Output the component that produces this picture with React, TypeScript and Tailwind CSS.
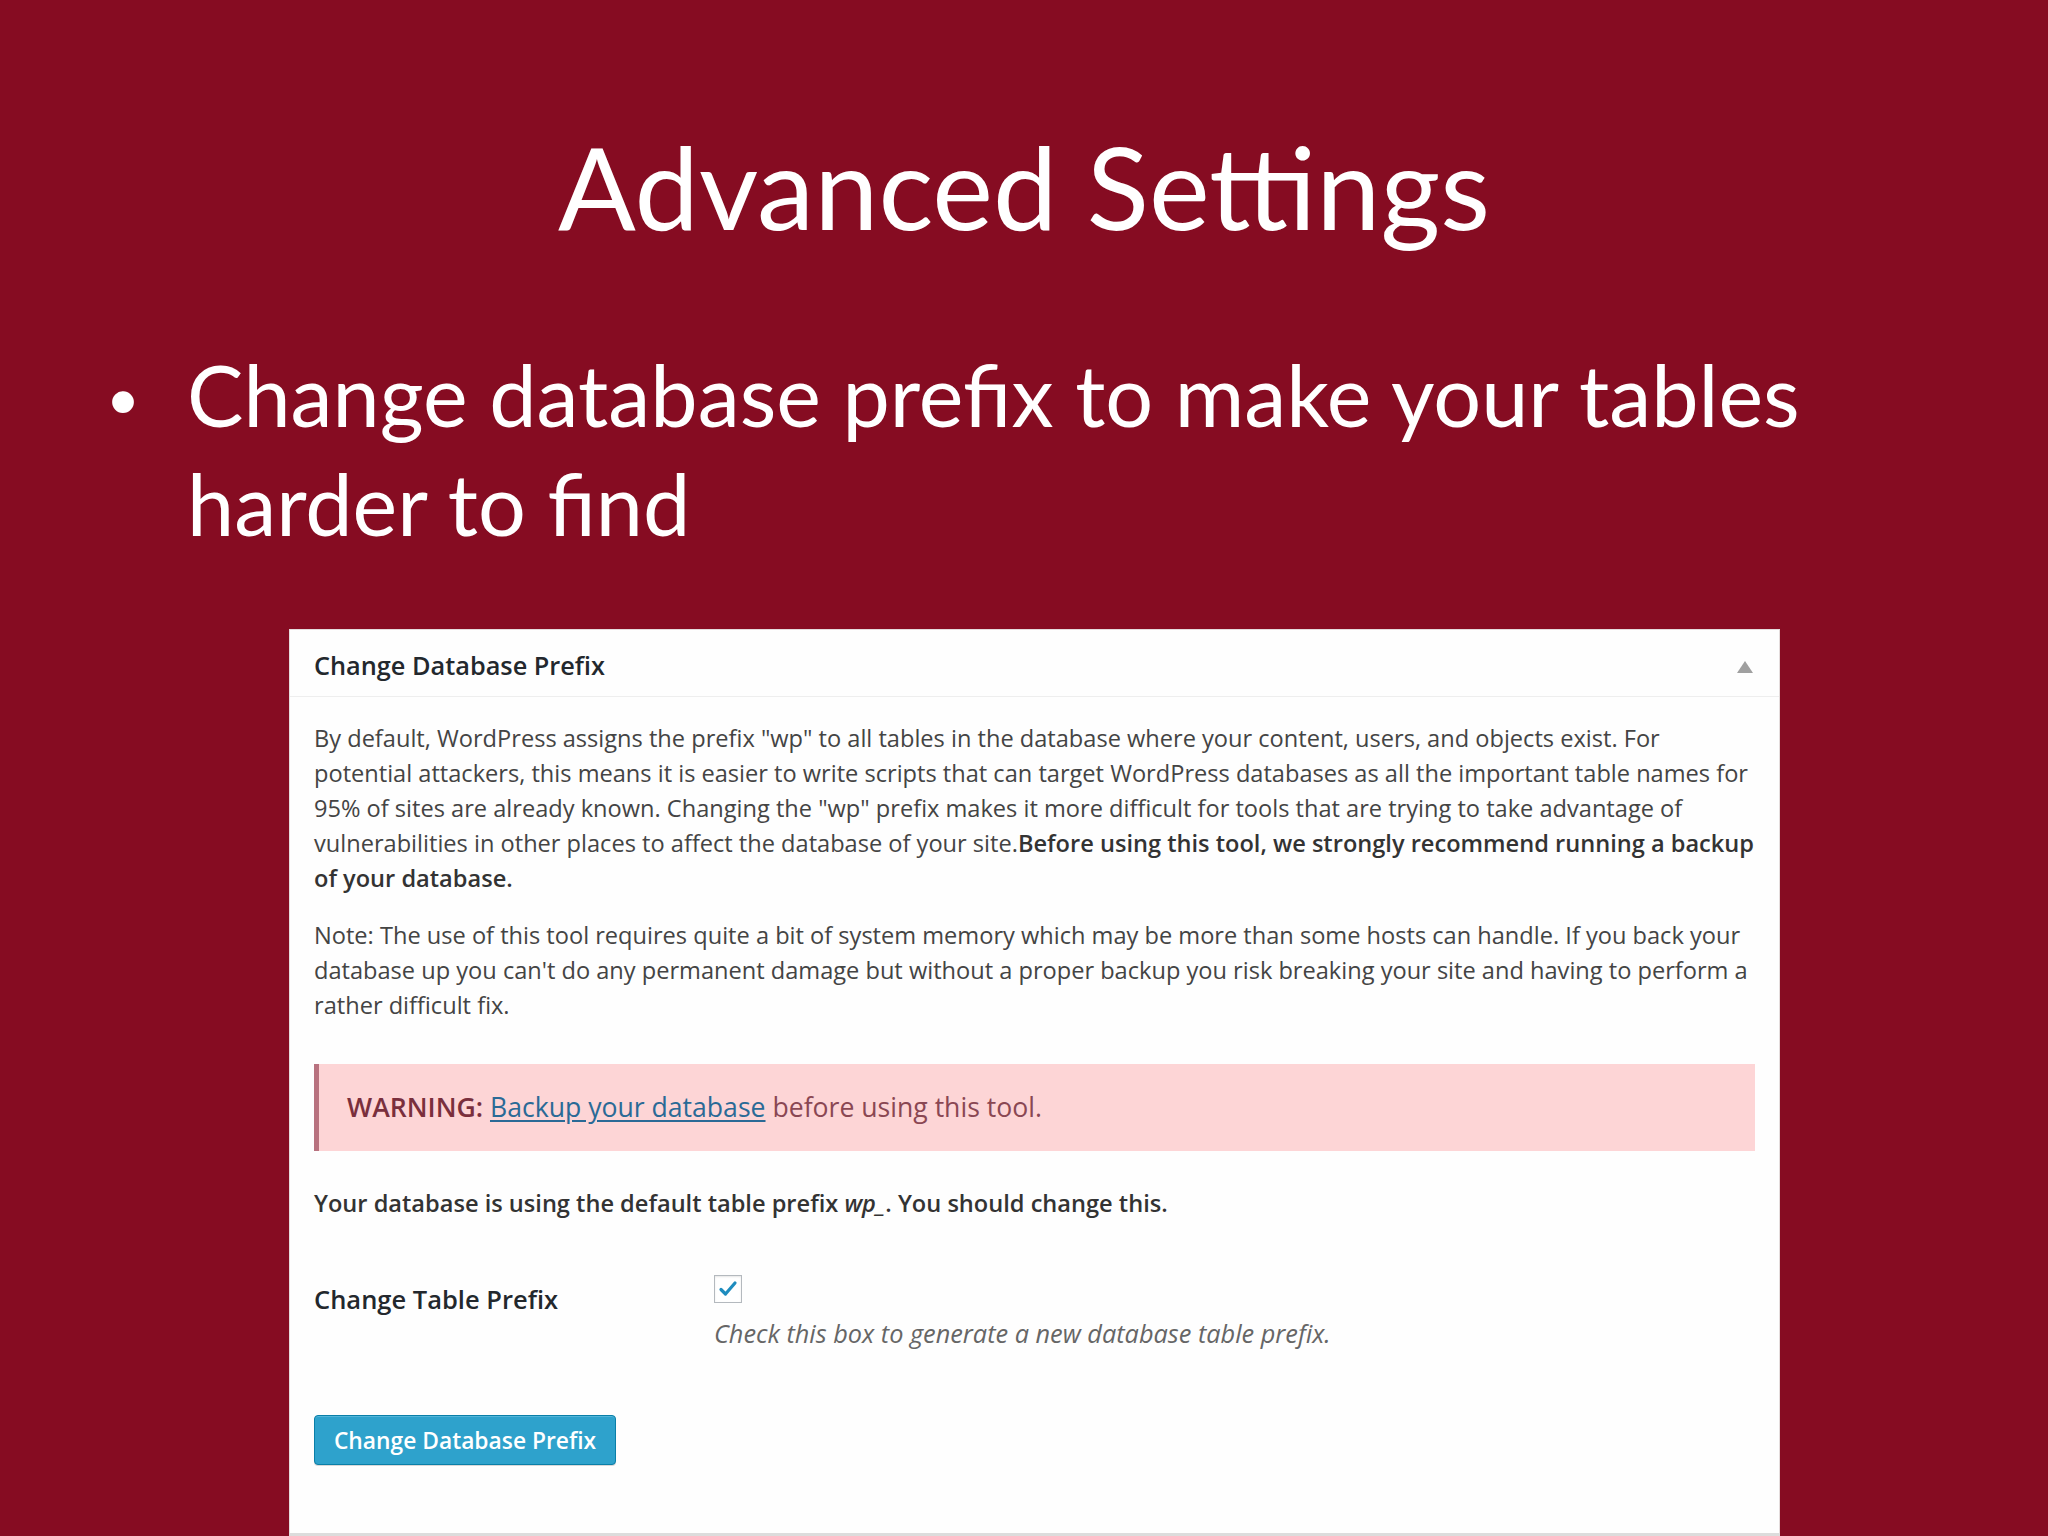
const P1 = [
  'By default, WordPress assigns the prefix "wp" to all tables in the database where your content, users, and objects exist. For',
  'potential attackers, this means it is easier to write scripts that can target WordPress databases as all the important table names for',
  '95% of sites are already known. Changing the "wp" prefix makes it more difficult for tools that are trying to take advantage of',
];

const P2 = [
  "Note: The use of this tool requires quite a bit of system memory which may be more than some hosts can handle. If you back your",
  "database up you can't do any permanent damage but without a proper backup you risk breaking your site and having to perform a",
  "rather difficult fix.",
];

export default function App() {
  return (
    <div className="w-[2048px] h-[1536px] overflow-hidden bg-[#860c22] flex flex-col font-['Lato',sans-serif]">
      <h1 className="pt-[128px] text-center text-white text-[115px] leading-none font-normal">Advanced Settings</h1>
      <ul className="mt-[97px] pl-[108px] text-white text-[84.5px] leading-[109px]">
        <li className="flex items-start">
          <span className="w-[79px] shrink-0 pl-[1px] mt-[7px] text-[80px] leading-[109px] font-['Liberation_Sans',sans-serif]">•</span>
          <span>
            Change database prefix to make your tables
            <br />
            harder to find
          </span>
        </li>
      </ul>

      <div className="ml-[289px] mt-[71px] w-[1491px] flex-1 bg-[#fefefe] border border-[#e4dcdc] border-b-[3px] border-b-[#dcdcdc] flex flex-col font-['Open_Sans',sans-serif]">
        <div className="h-[67px] shrink-0 border-b border-[#eeeeee] px-[24px] pt-[5px] flex items-center justify-between">
          <span className="text-[25.3px] font-semibold text-[#23282d]">Change Database Prefix</span>
          <svg width="16" height="12" viewBox="0 0 16 12" className="mr-[2px] mt-[2px]">
            <path d="M8 0 L16 12 L0 12 Z" fill="#a0a0a0" />
          </svg>
        </div>

        <div className="px-[24px] pt-[24px] text-[23.6px] leading-[35px] text-[#444444]">
          <p className="whitespace-nowrap">
            {P1[0]}
            <br />
            {P1[1]}
            <br />
            {P1[2]}
            <br />
            vulnerabilities in other places to affect the database of your site.
            <b className="font-semibold text-[#333]">Before using this tool, we strongly recommend running a backup</b>
            <br />
            <b className="font-semibold text-[#333]">of your database.</b>
          </p>
          <p className="mt-[22px] whitespace-nowrap">
            {P2[0]}
            <br />
            {P2[1]}
            <br />
            {P2[2]}
          </p>

          <div className="mt-[41px] h-[87px] border-l-[5px] border-[#b8727f] bg-[#fdd5d6] pl-[28px] flex items-center">
            <span className="text-[26.6px] text-[#8a4753]">
              <span className="font-semibold text-[#7a2f3d]">WARNING:</span>{" "}
              <a className="text-[#2a6a96] underline underline-offset-[3px]">Backup your database</a> before using this tool.
            </span>
          </div>

          <p className="mt-[35px] font-semibold text-[#333]">
            Your database is using the default table prefix <i>wp_</i>. You should change this.
          </p>

          <div className="mt-[54px] flex">
            <div className="w-[400px] shrink-0 pt-[7px]">
              <span className="text-[25.5px] font-semibold text-[#23282d]">Change Table Prefix</span>
            </div>
            <div className="flex flex-col">
              <div className="w-[28px] h-[28px] border border-[#b4b9be] bg-white shadow-[inset_0_1px_2px_rgba(0,0,0,0.1)] flex items-center justify-center">
                <svg width="20" height="18" viewBox="0 0 20 18">
                  <path d="M3 9.5 L7.5 14 L17 3" fill="none" stroke="#1e8cbe" strokeWidth="3.2" strokeLinecap="round" strokeLinejoin="round" />
                </svg>
              </div>
              <span className="mt-[13px] text-[25.3px] italic text-[#666]">Check this box to generate a new database table prefix.</span>
            </div>
          </div>

          <div className="mt-[64px]">
            <button className="w-[302px] h-[50px] rounded-[4px] bg-[#2ea2cc] border border-[#0a7fa8] shadow-[inset_0_1px_0_rgba(120,200,230,0.5),0_1px_0_rgba(0,0,0,0.15)] text-white text-[22.8px] font-semibold flex items-center justify-center">
              Change Database Prefix
            </button>
          </div>
        </div>
      </div>
    </div>
  );
}
